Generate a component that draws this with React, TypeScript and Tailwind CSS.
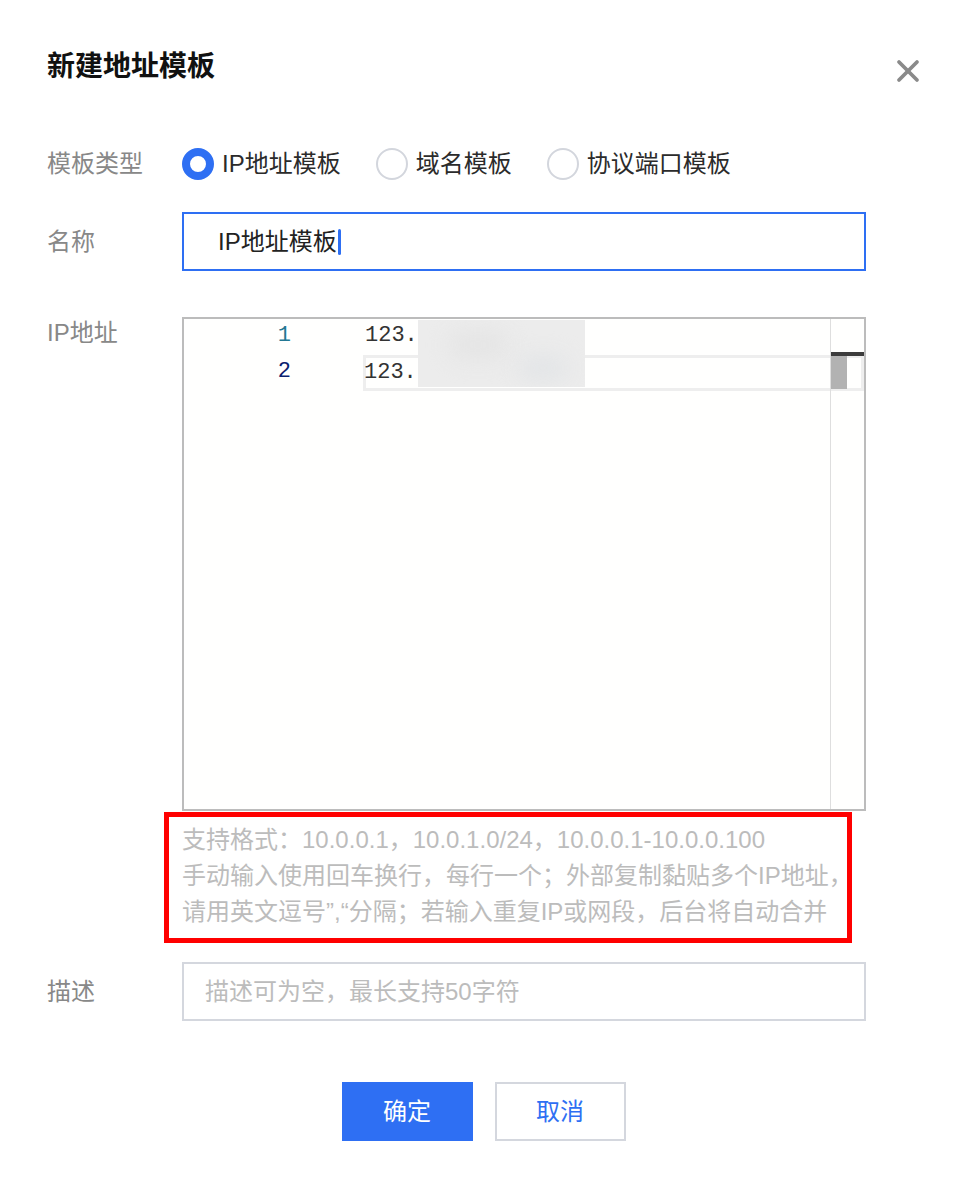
import { X } from "lucide-react";

const types = ["IP地址模板", "域名模板", "协议端口模板"];

function Radio({ label, checked }: { label: string; checked?: boolean }) {
  return (
    <div className="flex items-center">
      <span
        className={
          checked
            ? "w-[32px] h-[32px] rounded-full border-[8px] border-[#2e6ff3] bg-white"
            : "w-[32px] h-[32px] rounded-full border-2 border-[#d3d6dd] bg-white"
        }
      />
      <span className="ml-[8px] text-[24px] leading-[40px] text-[#2b2b2b]">{label}</span>
    </div>
  );
}

export default function App() {
  return (
    <div className="min-h-screen bg-white font-[family-name:'Liberation_Sans','Noto_Sans_CJK_SC',sans-serif]">
      <div className="pl-[47px] pr-[46px] pt-[47px] pb-[44px]">
        {/* header */}
        <div className="flex justify-between h-[40px]">
          <h1 className="text-[28px] leading-[40px] font-bold text-[#111]">新建地址模板</h1>
          <X className="mt-[6px] mr-[-6px] w-[36px] h-[36px] text-[#8a8a8a]" strokeWidth={2.5} />
        </div>

        {/* 模板类型 */}
        <div className="mt-[57px] flex items-center">
          <div className="w-[135px] text-[24px] leading-[40px] text-[#888]">模板类型</div>
          <div className="flex items-center gap-[35px]">
            {types.map((t, i) => (
              <Radio key={t} label={t} checked={i === 0} />
            ))}
          </div>
        </div>

        {/* 名称 */}
        <div className="mt-[28px] flex items-center">
          <div className="w-[135px] text-[24px] leading-[40px] text-[#888]">名称</div>
          <div className="w-[684px] h-[59px] border-2 border-[#2e6ff3] flex items-center pl-[34px] text-[24px] text-[#222]">
            IP地址模板
            <span className="inline-block w-[3px] h-[26px] bg-[#2e6ff3] rounded-sm ml-[1px]" />
          </div>
        </div>

        {/* IP地址 */}
        <div className="mt-[46px] flex">
          <div className="w-[135px] text-[24px] leading-[32px] text-[#888]">IP地址</div>
          <div>
            <div className="relative w-[684px] h-[494px] border-2 border-[#bcbcbc] bg-[#fffffe] flex font-['Liberation_Mono',monospace] text-[22px]">
              <div className="w-[107px] text-right">
                <div className="h-[36px] leading-[34px] text-[#237893]">1</div>
                <div className="h-[36px] leading-[34px] text-[#0b216f]">2</div>
              </div>
              <div className="flex-1 pl-[74px]">
                <div className="h-[36px] leading-[34px] text-[#333]">123.</div>
                <div className="h-[36px] leading-[30px] ml-[-2px] pl-[-1px] border-[3px] border-[#eeeeee] text-[#333]">
                  <span className="ml-[-2px]">123.</span>
                </div>
              </div>

              {/* blurred address */}
              <div className="absolute left-[234px] top-[1px] w-[167px] h-[67px] bg-[#ececec] overflow-hidden">
                <div className="absolute left-[30px] top-[10px] w-[60px] h-[30px] rounded-full bg-[#e5e5e5] blur-[10px]" />
                <div className="absolute left-[100px] top-[35px] w-[50px] h-[26px] rounded-full bg-[#e3e5e7] blur-[10px]" />
              </div>

              {/* ruler and scrollbar */}
              <div className="absolute top-0 bottom-0 left-[646px] w-px bg-[#dedede]" />
              <div className="absolute top-[34px] left-[647px] w-[16px] h-[36px] bg-[#b2b2b2]" />
              <div className="absolute top-[33px] left-[647px] right-0 h-[4px] bg-[#3c3c3c]" />
            </div>

            <div className="mt-[1px] ml-[-18px] w-[688px] border-[5px] border-[#ff0000] pl-[13px] pt-[5px] pb-[8px] text-[24px] leading-[36px] text-[#bcbcbc] whitespace-nowrap">
              <div>支持格式：10.0.0.1，10.0.1.0/24，10.0.0.1-10.0.0.100</div>
              <div>手动输入使用回车换行，每行一个；外部复制黏贴多个IP地址，</div>
              <div>请用英文逗号”,“分隔；若输入重复IP或网段，后台将自动合并</div>
            </div>
          </div>
        </div>

        {/* 描述 */}
        <div className="mt-[19px] flex items-center">
          <div className="w-[135px] text-[24px] leading-[40px] text-[#888]">描述</div>
          <div className="w-[684px] h-[59px] border-2 border-[#d4d7de] flex items-center pl-[21px] text-[24px] text-[#bcbcbc]">
            描述可为空，最长支持50字符
          </div>
        </div>

        {/* buttons */}
        <div className="mt-[61px] flex justify-center gap-[22px]">
          <button className="w-[131px] h-[59px] bg-[#2e6ff3] text-white text-[24px]">确定</button>
          <button className="w-[131px] h-[59px] border-2 border-[#d4d7de] bg-white text-[#2e6ff3] text-[24px]">取消</button>
        </div>
      </div>
    </div>
  );
}
